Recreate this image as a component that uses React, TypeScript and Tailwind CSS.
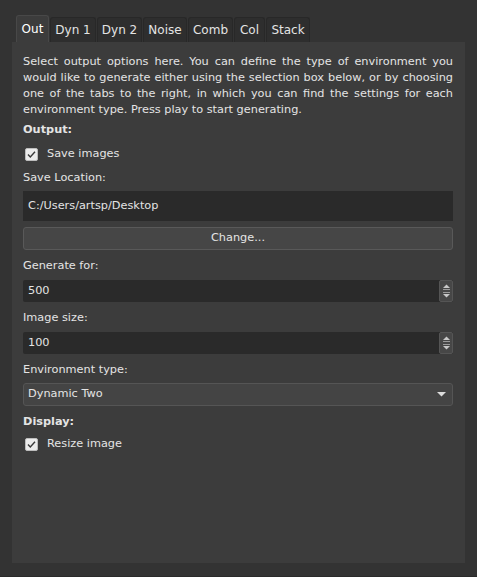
import React from "react";

const tabs = [
  { name: "Out", w: "w-[33px]" },
  { name: "Dyn 1", w: "w-[46px]" },
  { name: "Dyn 2", w: "w-[45px]" },
  { name: "Noise", w: "w-[44px]" },
  { name: "Comb", w: "w-[45px]" },
  { name: "Col", w: "w-[31px]" },
  { name: "Stack", w: "w-[44px]" },
];

const intro = [
  "Select output options here. You can define the type of environment you",
  "would like to generate either using the selection box below, or by choosing",
  "one of the tabs to the right, in which you can find the settings for each",
];

function CheckBox({ label }: { label: string }) {
  return (
    <div className="flex h-4 items-center">
      <div className="ml-[2px] flex h-[13px] w-[13px] items-center justify-center rounded-[2px] border border-[#bdbdbd] bg-[#ececec]">
        <svg width="11" height="11" viewBox="0 0 11 11">
          <path d="M2 5.5 L4.3 8 L9 2.8" fill="none" stroke="#3a3a3a" strokeWidth="1.4" />
        </svg>
      </div>
      <span className="ml-[9px]">{label}</span>
    </div>
  );
}

function SpinBox({ value }: { value: string }) {
  return (
    <div className="flex h-[22px] items-stretch rounded-[2px] bg-[#2a2a2a]">
      <div className="flex flex-1 items-center pl-[5px]">{value}</div>
      <div className="flex w-[14px] flex-col items-center justify-center gap-[2px] rounded-[2px] border border-[#555] bg-[#474747]">
        <svg width="9" height="6" viewBox="0 0 9 6">
          <path d="M1 4 L4.5 0.5 L8 4 Z" fill="#c8c8c8" />
          <rect x="1" y="5" width="7" height="1" fill="#9a9a9a" />
        </svg>
        <svg width="9" height="6" viewBox="0 0 9 6">
          <rect x="1" y="0" width="7" height="1" fill="#9a9a9a" />
          <path d="M1 2 L8 2 L4.5 5.5 Z" fill="#c8c8c8" />
        </svg>
      </div>
    </div>
  );
}

export default function App() {
  return (
    <div
      className="h-[577px] w-[477px] overflow-hidden bg-[#333333] text-[11.3px] text-[#e4e4e4]"
      style={{ fontFamily: "Tahoma, 'DejaVu Sans', sans-serif" }}
    >
      <div className="flex h-full flex-col border-b border-[#2a2a2a]">
        <div className="flex items-end gap-px pl-4 pt-[15px]">
          {tabs.map((t, i) =>
            i === 0 ? (
              <div
                key={t.name}
                className={`${t.w} flex h-[27px] items-center justify-center rounded-t-[3px] border border-b-0 border-[#484848] bg-[#3c3c3c] text-[12px] text-white`}
              >
                {t.name}
              </div>
            ) : (
              <div
                key={t.name}
                className={`${t.w} flex h-[25px] items-center justify-center rounded-t-[3px] border border-b-0 border-[#282828] bg-[#2e2e2e] text-[12px]`}
              >
                {t.name}
              </div>
            )
          )}
        </div>
        <div className="mx-3 mb-[13px] flex flex-1 flex-col bg-[#3c3c3c] pl-[11px] pr-3 pt-3">
          <div className="leading-4">
            {intro.map((line) => (
              <div key={line} className="whitespace-nowrap text-justify [text-align-last:justify]">
                {line}
              </div>
            ))}
            <div>environment type. Press play to start generating.</div>
          </div>
          <div className="mt-1 flex h-4 items-center font-bold">Output:</div>
          <div className="mt-2">
            <CheckBox label="Save images" />
          </div>
          <div className="mt-2 flex h-4 items-center">Save Location:</div>
          <div className="mt-[5px] flex h-[30px] items-center bg-[#2a2a2a] pl-[5px]">
            C:/Users/artsp/Desktop
          </div>
          <div className="mt-[6px] flex h-[23px] items-center justify-center rounded-[3px] border border-[#595959] bg-[#464646]">
            Change...
          </div>
          <div className="mt-2 flex h-4 items-center">Generate for:</div>
          <div className="mt-[6px]">
            <SpinBox value="500" />
          </div>
          <div className="mt-2 flex h-4 items-center">Image size:</div>
          <div className="mt-[6px]">
            <SpinBox value="100" />
          </div>
          <div className="mt-2 flex h-4 items-center">Environment type:</div>
          <div className="mt-[5px] flex h-[23px] items-center justify-between rounded-[3px] border border-[#555] bg-[#444444] pl-[4px] pr-[6px]">
            <span>Dynamic Two</span>
            <svg width="9" height="5" viewBox="0 0 9 5">
              <path d="M0 0 L9 0 L4.5 4.5 Z" fill="#dcdcdc" />
            </svg>
          </div>
          <div className="mt-2 flex h-4 items-center font-bold">Display:</div>
          <div className="mt-[6px]">
            <CheckBox label="Resize image" />
          </div>
        </div>
      </div>
    </div>
  );
}
